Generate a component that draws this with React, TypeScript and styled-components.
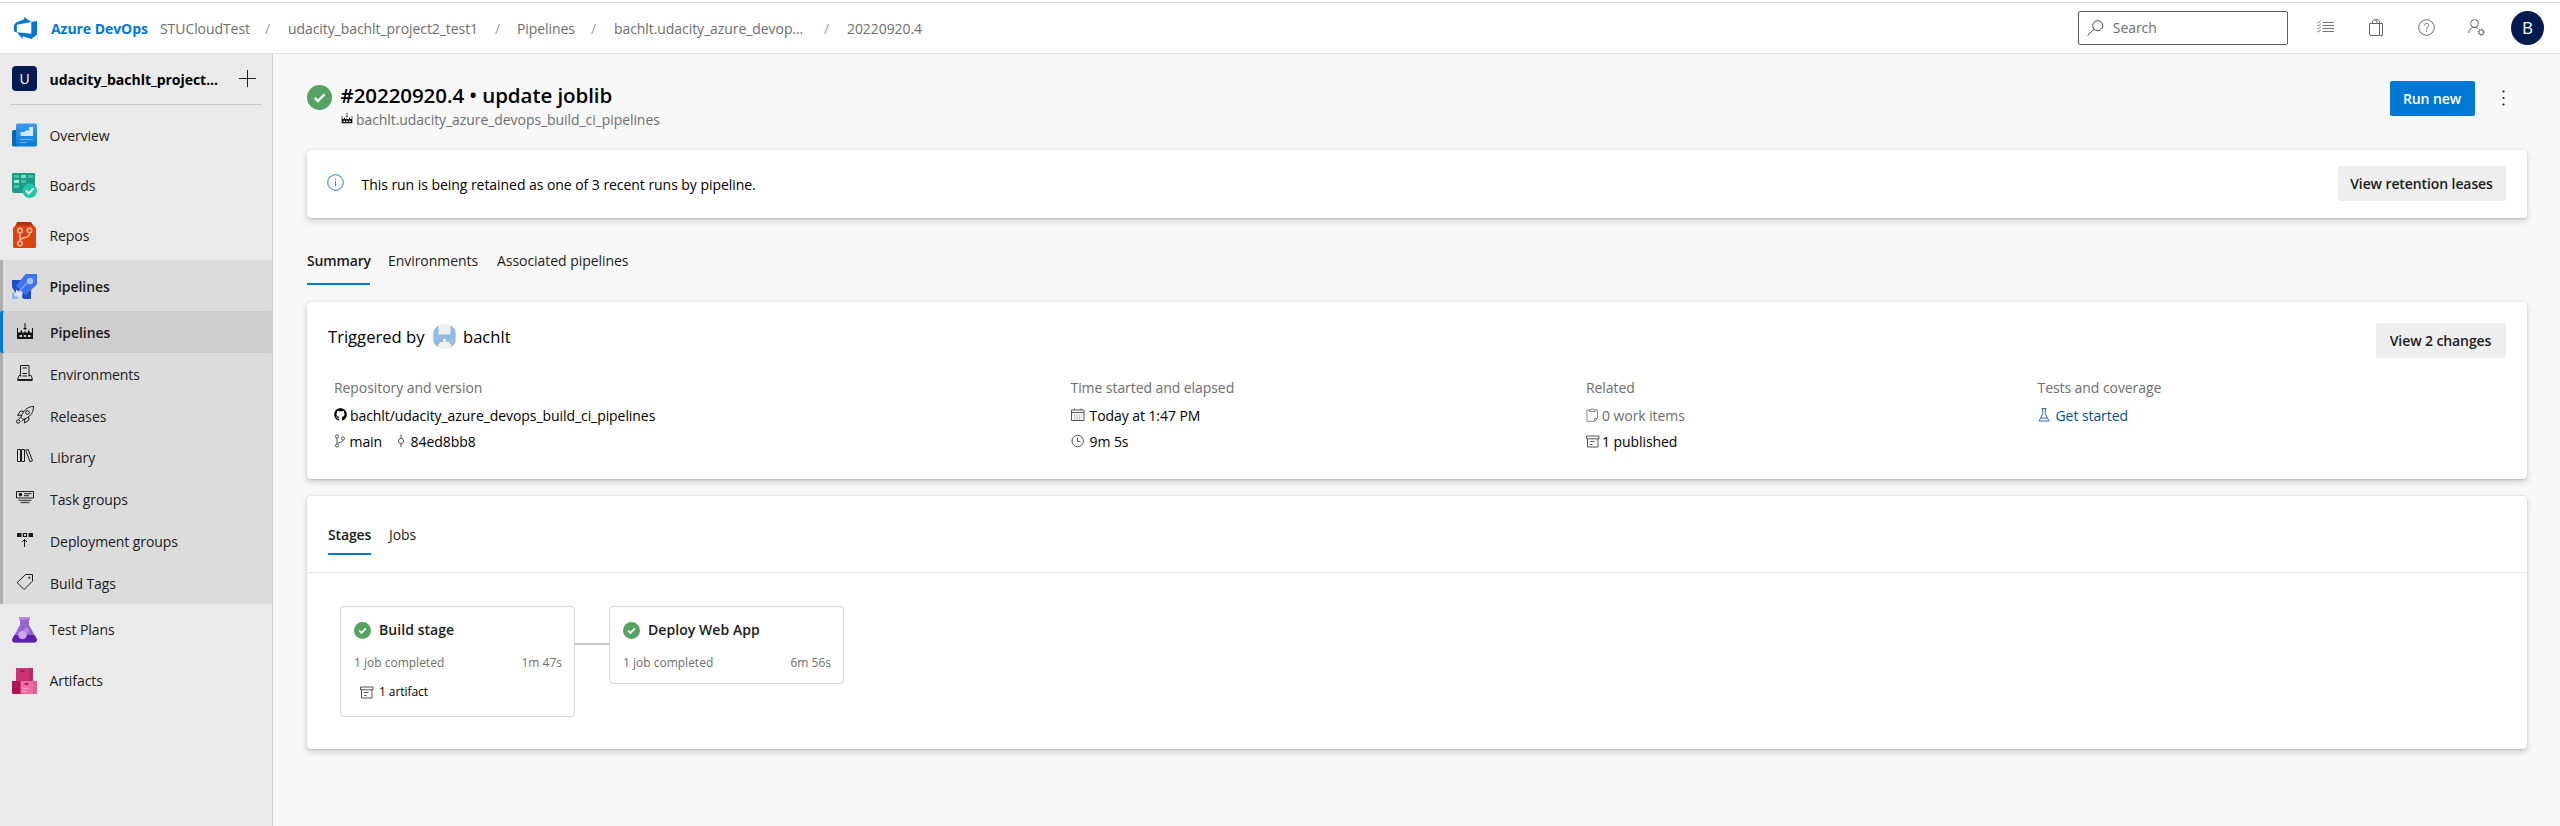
import React from "react";
import styled, { createGlobalStyle, css } from "styled-components";
import { FaGithub } from "react-icons/fa";

const GlobalStyle = createGlobalStyle`
  *, *::before, *::after { box-sizing: border-box; }
  body {
    margin: 0;
    background: #f8f8f8;
    color: #000;
    font-family: "Open Sans", "Noto Sans", sans-serif;
    font-size: 14px;
    line-height: 20px;
    letter-spacing: -0.07px;
    white-space: nowrap;
  }
  svg { display: block; flex: none; overflow: visible; }
`;

const Page = styled.div`
  display: flex;
  flex-direction: column;
  width: 2560px;
  height: 826px;
  overflow: hidden;
`;

/* ---------- top bar ---------- */
const TopBar = styled.header`
  display: flex;
  align-items: center;
  flex: none;
  height: 54px;
  padding: 3px 16px 0 14px;
  background: linear-gradient(#fff 2px, #dadada 2px, #dadada 3px, #fff 3px);
  border-bottom: 1px solid #e3e3e3;
`;
const Brand = styled.a`
  width: 109px;
  margin-left: 14px;
  padding-top: 1px;
  color: #0078d4;
  font-weight: 700;
  letter-spacing: -0.05px;
`;
const Crumbs = styled.nav`
  display: grid;
  grid-template-columns: 105px 23px 207px 22px 74px 23px 210px 23px 80px;
  padding-top: 1px;
  color: #6e6e6e;
`;
const Slash = styled.span`
  color: #9a9a9a;
`;
const TopActions = styled.div`
  display: flex;
  align-items: center;
  margin-left: auto;
  color: #666;
`;
const SearchBox = styled.div`
  display: flex;
  align-items: center;
  gap: 9px;
  width: 210px;
  height: 34px;
  margin-right: 13px;
  padding-left: 8px;
  border: 1px solid #5c5c5c;
  border-radius: 2px;
  color: #6e6e6e;
`;
const IconSlot = styled.span`
  display: flex;
  justify-content: center;
  width: 50.3px;
  margin-top: -2px;
`;
const UserDot = styled.span`
  width: 33px;
  height: 34px;
  margin-left: 9px;
  border-radius: 50%;
  background: #001b50;
  color: #fff;
  font-size: 17px;
  line-height: 34px;
  text-align: center;
`;

/* ---------- side bar ---------- */
const Body = styled.div`
  display: flex;
  flex: 1;
  min-height: 0;
`;
const Sidebar = styled.aside`
  flex: none;
  width: 273px;
  background: #eaeaea;
  border-right: 1px solid #d0d0d0;
`;
const ProjectRow = styled.div`
  display: flex;
  align-items: center;
  height: 51px;
  margin: 0 11px 5px;
  padding: 0 5px 2px 1px;
  border-bottom: 1px solid #c9c9c9;
  font-weight: 700;
`;
const ProjectTile = styled.span`
  width: 25px;
  height: 25px;
  border-radius: 4px;
  background: #001b50;
  color: #fff;
  font-weight: 400;
  line-height: 25px;
  text-align: center;
`;
const ProjectName = styled.span`
  flex: 1;
  margin: 3px 0 0 12.5px;
  letter-spacing: -0.03px;
`;
const NavItem = styled.a<{ $strong?: boolean; $height?: number }>`
  display: flex;
  align-items: center;
  gap: 12.5px;
  height: ${(p) => p.$height ?? 50}px;
  padding-left: 12px;
  padding-top: ${(p) => (p.$strong || p.$height ? 2 : 1)}px;
  color: #1b1b1b;
  font-weight: ${(p) => (p.$strong ? 550 : 400)};
  svg { margin-top: -1px; }
`;
const NavGroup = styled.div`
  background: #dcdcdc;
  box-shadow: inset 3px 0 #adadad;
`;
const SubItem = styled.a<{ $active?: boolean }>`
  display: flex;
  align-items: center;
  gap: 16px;
  height: 41.85px;
  padding-top: 2px;
  padding-left: 16px;
  color: #1b1b1b;
  svg { margin-top: -4px; }
  ${(p) =>
    p.$active &&
    css`
      background: #cecece;
      box-shadow: inset 3px 0 #0078d4;
      border-radius: 2px;
      font-weight: 550;
    `}
`;

/* ---------- main ---------- */
const Main = styled.main`
  flex: 1;
  min-width: 0;
  padding: 22px 33px 0 34px;
`;
const RunHeader = styled.div`
  display: flex;
  align-items: flex-start;
  height: 74px;
`;
const StatusSlot = styled.span`
  padding-top: 9px;
`;
const RunTitle = styled.div`
  flex: 1;
  padding-left: 8.5px;
`;
const Title = styled.h1`
  margin: 5px 0 1px;
  font-size: 20.5px;
  font-weight: 550;
  line-height: 28px;
  letter-spacing: -0.07px;
`;
const Subtitle = styled.div`
  display: flex;
  gap: 3.5px;
  align-items: center;
  color: #6e6e6e;
  svg { margin-top: -4px; }
`;
const Button = styled.button<{ $primary?: boolean; $width: number }>`
  flex: none;
  width: ${(p) => p.$width}px;
  height: 35px;
  padding: 1px 1px 0 0;
  border: 0;
  border-radius: 2px;
  background: ${(p) => (p.$primary ? "#0078d4" : "#efefef")};
  color: ${(p) => (p.$primary ? "#fff" : "#1b1b1b")};
  font: inherit;
  font-weight: ${(p) => (p.$primary ? 650 : 550)};
  letter-spacing: -0.1px;
`;
const RunButton = styled(Button)`
  margin-top: 5px;
`;
const More = styled.span`
  width: 3px;
  margin: 14px 22px 0 27px;
`;
const Card = styled.section`
  border-radius: 4px;
  background: #fff;
  box-shadow: 0 3px 7px rgba(0, 0, 0, 0.16), 0 0.6px 2px rgba(0, 0, 0, 0.14);
`;
const Notice = styled(Card)`
  display: flex;
  align-items: center;
  height: 68px;
  padding: 0 21px 1px 20px;
  > svg { margin-top: -3px; }
`;
const NoticeText = styled.span`
  flex: 1;
  margin: 2px 0 0 17.5px;
  letter-spacing: -0.05px;
`;
const Tabs = styled.div<{ $card?: boolean }>`
  display: flex;
  gap: 18px;
  height: ${(p) => (p.$card ? 77 : 84)}px;
  padding: ${(p) => (p.$card ? "20px 21px 0" : "25px 0 0")};
  border-bottom: ${(p) => (p.$card ? "1px solid #e6e6e6" : "0")};
  --tab-height: ${(p) => (p.$card ? 39 : 42)}px;
  --tab-top: ${(p) => (p.$card ? 9 : 8)}px;
`;
const Tab = styled.a<{ $active?: boolean; $width: number }>`
  width: ${(p) => p.$width}px;
  height: var(--tab-height);
  padding-top: var(--tab-top);
  color: #1b1b1b;
  font-weight: ${(p) => (p.$active ? 550 : 400)};
  letter-spacing: ${(p) => (p.$active ? -0.15 : -0.05)}px;
  box-shadow: ${(p) => (p.$active ? "inset 0 -2px #0078d4" : "none")};
`;
const Summary = styled(Card)`
  height: 177px;
  margin-bottom: 17px;
  padding: 21px 21px 0;
`;
const SummaryTop = styled.div`
  display: flex;
  justify-content: space-between;
  align-items: flex-start;
`;
const Triggered = styled.div`
  display: flex;
  align-items: center;
  height: 26px;
  font-size: 16.6px;
  letter-spacing: 0;
`;
const TriggeredLabel = styled.span`
  width: 103.5px;
  padding-top: 2px;
`;
const TriggeredName = styled.span`
  margin-left: 6.5px;
  padding-top: 2px;
`;
const Facts = styled.div`
  display: grid;
  grid-template-columns: 736.5px 515.5px 451.5px auto;
  padding: 20px 0 0 6px;
`;
const Fact = styled.div`
  display: flex;
  flex-direction: column;
  gap: 6.5px;
`;
const FactLabel = styled.div`
  color: #6e6e6e;
`;
const FactRow = styled.div<{ $tone?: string; $gap?: number }>`
  display: flex;
  align-items: center;
  gap: ${(p) => p.$gap ?? 3}px;
  padding-top: 1px;
  margin-bottom: -1px;
  color: ${(p) => p.$tone ?? "#000"};
  svg { margin-top: -2px; }
`;
const Commit = styled.span`
  display: flex;
  align-items: center;
  gap: 5.5px;
  margin-left: 10.5px;
`;
const Pipeline = styled(Card)`
  height: 253px;
`;
const Flow = styled.div`
  display: flex;
  align-items: flex-start;
  padding: 33px 0 0 33px;
`;
const Stage = styled.article<{ $height: number }>`
  width: 235px;
  height: ${(p) => p.$height}px;
  padding: 13px 12px 0 13px;
  border: 1px solid #d6d6d6;
  border-radius: 4px;
`;
const Connector = styled.div`
  width: 34px;
  height: 2px;
  margin-top: 37px;
  background: #c8c8c8;
`;
const StageName = styled.div`
  display: flex;
  align-items: center;
  gap: 8px;
  font-weight: 550;
  color: #1b1b1b;
  letter-spacing: 0.06px;
`;
const StageInfo = styled.div`
  display: flex;
  justify-content: space-between;
  margin-top: 13px;
  color: #6e6e6e;
  font-size: 12px;
  letter-spacing: 0;
`;
const StageArtifact = styled.div`
  display: flex;
  align-items: center;
  gap: 5px;
  margin: 9px 0 0 6px;
  font-size: 12px;
`;

/* ---------- icons ---------- */
const line = { fill: "none", stroke: "currentColor", strokeWidth: 1 } as const;

const DevOpsLogo = () => (
  <svg width="23" height="22" viewBox="0 0 24 24" fill="#0078d4" preserveAspectRatio="none">
    <path d="M0 8.877L2.247 5.91l8.405-3.416V.022l7.37 5.393L2.966 8.338v8.225L0 15.707zm24-4.45v14.651l-5.753 4.9-9.303-3.057v3.056l-5.978-7.416 15.057 1.798V5.415z" />
  </svg>
);
const Check = ({ size }: { size: number }) => (
  <svg width={size} height={size} viewBox="0 0 16 16">
    <circle cx="8" cy="8" r="8" fill="#55a362" />
    <path d="M4.9 8.2l2.1 2.1 4.2-4.3" fill="none" stroke="#fff" strokeWidth="1.6" />
  </svg>
);
const SearchIcon = () => (
  <svg width="17" height="16" viewBox="0 0 17 16" {...line} stroke="#444">
    <circle cx="10.7" cy="5.7" r="5" />
    <path d="M7 9.3L.6 15.4" />
  </svg>
);
const ListIcon = () => (
  <svg width="17" height="14" viewBox="0 0 17 14" {...line} strokeWidth=".9">
    <path d="M5.5 2.5H17M5.5 5.5H17M5.5 8.5H17M5.5 11.5H17M.5 2l1 1L3.8.8M.5 5l1 1 2.3-2.2M.5 8l1 1 2.3-2.2M.5 11l1 1 2.3-2.2" />
  </svg>
);
const BagIcon = () => (
  <svg width="15" height="17" viewBox="0 0 15 17" {...line}>
    <path d="M.5 4.5h13v12H2a1.5 1.5 0 0 1-1.5-1.5zM10.5 4.5v12M3.5 4.5V3a2.2 2.2 0 0 1 4.5 0v1.5M6 1.2c2-1.5 4.5 0 4.5 2v1" />
  </svg>
);
const HelpIcon = () => (
  <svg width="17" height="17" viewBox="0 0 17 17" {...line}>
    <circle cx="8.5" cy="8.5" r="7.8" />
    <path d="M6.3 6.5c0-3 4.4-2.9 4.4-.2 0 1.600-2.200 1.900-2.200 4M8.5 11.700v1.300" />
  </svg>
);
const UserGearIcon = () => (
  <svg width="17" height="17" viewBox="0 0 17 17" {...line}>
    <circle cx="6.5" cy="4.5" r="3.9" />
    <path d="M.6 14c.4-3.5 2.5-5.6 5.9-5.6 1.800 0 2.900.6 3.700 1.400" />
    <circle cx="13.2" cy="13.2" r="2.3" />
    <circle cx="13.2" cy="13.2" r="3.2" strokeDasharray="1.2 1.3" />
  </svg>
);
const PlusIcon = () => (
  <svg width="17" height="17" viewBox="0 0 17 17" {...line} stroke="#222">
    <path d="M8.5 0v17M0 8.5h17" />
  </svg>
);
const MoreIcon = () => (
  <svg width="3" height="16" viewBox="0 0 3 16" fill="#222">
    <circle cx="1.5" cy="1.5" r="1.1" />
    <circle cx="1.5" cy="8" r="1.1" />
    <circle cx="1.5" cy="14.5" r="1.1" />
  </svg>
);
const InfoIcon = () => (
  <svg width="17" height="17" viewBox="0 0 17 17" {...line} stroke="#2b7cd3">
    <circle cx="8.5" cy="8.5" r="7.8" />
    <path d="M8.5 7.2v5M8.5 4.6v1.2" />
  </svg>
);

const OverviewIcon = () => (
  <svg width="25" height="24" viewBox="0 0 25 24">
    <defs>
      <linearGradient id="ov" x1="0" y1="0" x2="0" y2="1">
        <stop offset="0" stopColor="#3f9be8" />
        <stop offset="1" stopColor="#0878d6" />
      </linearGradient>
    </defs>
    <path d="M1.5 7H5v16.5H1.5A1.5 1.5 0 0 1 0 22V8.5A1.5 1.5 0 0 1 1.5 7z" fill="#1266ad" />
    <path d="M5.5.5h18A1.5 1.5 0 0 1 25 2v20a1.5 1.5 0 0 1-1.5 1.5H4V2A1.5 1.5 0 0 1 5.5.5z" fill="url(#ov)" />
    <path d="M8.5 13V9H13V7.5h4V4h4v9z" fill="#d3e9fb" />
    <path d="M8 16.5h13M8 19.5h6.5" stroke="#6db5f0" strokeWidth="1.2" />
  </svg>
);
const BoardsIcon = () => (
  <svg width="25" height="25" viewBox="0 0 25 25">
    <path d="M1 0h21a1 1 0 0 1 1 1v19H2a2 2 0 0 1-2-2V1a1 1 0 0 1 1-1z" fill="#1f9a84" />
    <path d="M2 2h5v3H2zM16 2h5v3h-5zM9 7h5v3H9zM2 12h5v3H2z" fill="#40c3a4" />
    <path d="M9 2h5v3H9z" fill="#78e0c4" />
    <path d="M2 7h5v3H2z" fill="#b4f5e2" />
    <circle cx="17.8" cy="17.8" r="7.2" fill="#20c6a5" />
    <path d="M14 17.5l2.7 2.8 5-5" fill="none" stroke="#fff" strokeWidth="1.9" />
  </svg>
);
const ReposIcon = () => (
  <svg width="25" height="26" viewBox="0 0 25 26">
    <path d="M5 0h14l3 4.5H3z" fill="#b93105" />
    <path d="M1 6l2.5-2.5h18L24 6v18.5a1.5 1.5 0 0 1-1.5 1.5h-20A1.5 1.5 0 0 1 1 24.5z" fill="#d9440f" />
    <g fill="none" stroke="#ffb79c" strokeWidth="1.5">
      <circle cx="8" cy="8.5" r="2.3" />
      <circle cx="17.5" cy="8.5" r="2.3" />
      <circle cx="8" cy="21.5" r="2.3" />
      <path d="M8 10.8v8.4M17.5 10.8v1.5c0 2-1.5 2.5-3.5 3s-6 1-6 3.5" />
    </g>
  </svg>
);
const RocketIcon = () => (
  <svg width="25" height="25" viewBox="0 0 25 25">
    <path d="M0 6h11v7l-6 6H3.5L0 13zM11 17l8-3v11h-7.5L10 23z" fill="#1c4fc4" />
    <path d="M13.5 0H25v10.5L13.5 21 4 12z" fill="#3f74ea" />
    <path d="M15 9l-8.5 9" stroke="#7ea6f5" strokeWidth="1.3" />
    <circle cx="18" cy="7" r="3.2" fill="#a7c4fa" />
    <path d="M4.5 15.5L10 21l-3 1-3.5-3.5z" fill="#dce6fb" />
    <path d="M0 18.5h2.5v4H6V25H0z" fill="#92b2f4" />
  </svg>
);
const TestPlansIcon = () => (
  <svg width="25" height="26" viewBox="0 0 25 26">
    <path d="M7 0h11v2.5h-1V8l7.5 13.5c1 2-.2 4-2.5 4H3c-2.3 0-3.5-2-2.5-4L8 8V2.5H7z" fill="#9a63d2" />
    <path d="M2.5 18h20l2 3.5c1 2-.2 4-2.5 4H3c-2.3 0-3.5-2-2.5-4z" fill="#5c1eab" />
    <path d="M7 0h11v2.5H7z" fill="#b18bdd" />
    <circle cx="10.5" cy="18" r="4.3" fill="#c9a6ec" />
    <circle cx="14.5" cy="13.5" r="2.4" fill="#b78ee3" />
  </svg>
);
const ArtifactsIcon = () => (
  <svg width="25" height="26" viewBox="0 0 25 26">
    <path d="M4 0h17v13H4z" fill="#cc3075" />
    <path d="M17 0h4v13h-4z" fill="#b9286a" />
    <path d="M0 13h9v13H1a1 1 0 0 1-1-1z" fill="#ad1457" />
    <path d="M8.5 13H25v12a1 1 0 0 1-1 1H8.5z" fill="#ee6ba2" />
    <path d="M21 13h4v12a1 1 0 0 1-1 1h-3z" fill="#e45b95" />
    <path d="M8.5 3h4M5 16h3M12.5 16h4" stroke="#971650" strokeWidth="1.7" />
    <path d="M10.5 20.5h6M10.5 23.5h4" stroke="#f5a3c6" strokeWidth="1.3" />
  </svg>
);

const BuildIcon = ({ w = 18 }: { w?: number }) => (
  <svg width={w} height={w} viewBox="0 0 18 18" fill="#111">
    <path d="M8.5 1h1v5H11L9 8 7 6h1.5z" />
    <path fillRule="evenodd" d="M1 6h1v4.5h2.5V9L6 8v2.5h2.3v-1h1.4v1H12V8l1.5 1v1.5H16V6h1v11H1zM3.5 13v2H6v-2zM7.8 13v2h2.4v-2zM12 13v2h2.5v-2z" />
  </svg>
);
const EnvIcon = () => (
  <svg width="18" height="18" viewBox="0 0 18 18" {...line}>
    <path d="M4.5 12.5v-11H13v11M6.5 4H11M6.5 9.5H11M6.5 12H11M4.5 11.5H3l-1.5 4h15l-1.5-4h-2M1.5 16.5h15" />
  </svg>
);
const ReleaseIcon = () => (
  <svg width="18" height="18" viewBox="0 0 18 18" {...line}>
    <path d="M17.5.5c-5 0-8.5 2.5-11.5 8l-1 3 2 2 3-1c5.5-3 7.5-7 7.5-12zM8 5.5L4.5 5l-3 4.5L6 9M12.5 10.5l.5 3.5-4.5 3 .3-4.5M5 11l-2.5 2M7.5 13.5l-1.500 2" />
    <circle cx="11.5" cy="6.5" r="1.8" />
    <circle cx="2.2" cy="15.5" r="1.7" />
  </svg>
);
const LibraryIcon = () => (
  <svg width="18" height="18" viewBox="0 0 18 18" {...line}>
    <path d="M1.5 2.5h3v12h-3zM5.500 2.500h3v12h-3zM9.700 3.200l2.500-.8 4.300 11.400-2.500.9z" />
  </svg>
);
const TaskGroupIcon = () => (
  <svg width="18" height="18" viewBox="0 0 18 18" {...line}>
    <path d="M.5 2.5h17V9H.5zM8 4.7h7.500M8 6.700h5" />
    <path d="M3.3 4.5h2.2v2.2H3.3z" fill="currentColor" />
    <path d="M2.5 11.3h13M4.5 13.5h9" strokeWidth="1.3" opacity=".7" />
  </svg>
);
const DeployIcon = () => (
  <svg width="18" height="18" viewBox="0 0 18 18" {...line}>
    <path d="M1 2h4.5v4H1zM12.5 2H17v4h-4.5z" fill="currentColor" stroke="none" />
    <path d="M7.3 2.5h3.2v3H7.3z" strokeWidth="1.2" />
    <path d="M8.5 8.5V16M6 11l2.5-2.5L11 11" />
  </svg>
);
const TagIcon = () => (
  <svg width="18" height="18" viewBox="0 0 18 18" {...line}>
    <path d="M9.5 1.5h7v6.8L8 16.5 1.2 9.7z" />
    <circle cx="13.3" cy="4.7" r=".7" />
  </svg>
);
const BranchIcon = () => (
  <svg width="11" height="14" viewBox="0 0 11 14" {...line} stroke="#555">
    <circle cx="3" cy="2.5" r="1.6" />
    <circle cx="3" cy="11.5" r="1.6" />
    <circle cx="9" cy="4.5" r="1.6" />
    <path d="M3 4.2v5.600M9 6.200c0 2.300-4.300 1.500-5.500 3.700" />
  </svg>
);
const CommitIcon = () => (
  <svg width="8" height="14" viewBox="0 0 8 14" {...line} stroke="#555">
    <circle cx="4" cy="7" r="2.6" />
    <path d="M4 .5v4M4 9.600v3.500" />
  </svg>
);
const CalendarIcon = () => (
  <svg width="14" height="14" viewBox="0 0 14 14" {...line} stroke="#555">
    <path d="M.5 2H13v10.500H.5zM.5 4.500H13M3.500.5V2M10 .5V2" />
    <path d="M3 7h8M3 9h8M3 11h6" strokeDasharray="1.2 1.2" opacity=".7" />
  </svg>
);
const ClockIcon = () => (
  <svg width="14" height="14" viewBox="0 0 14 14" {...line} stroke="#555">
    <circle cx="6.7" cy="7" r="5.7" />
    <path d="M6.5 3.500v4h3" />
  </svg>
);
const ClipboardIcon = () => (
  <svg width="13" height="14" viewBox="0 0 13 14" {...line} stroke="#888">
    <path d="M3.5 2H1v11.300h7.500l3-2.800V2H9M3.500 3.500V1.800H5a1.200 1.200 0 0 1 2.400 0H9v1.700zM8.500 13v-2.500h3" />
  </svg>
);
const BoxIcon = () => (
  <svg width="14" height="13" viewBox="0 0 14 13" {...line} stroke="#555">
    <path d="M.5 1H13v2.800H.5zM1.500 3.800V12H12V3.800M4 6.500h4.500M4 9.500h2.500" />
  </svg>
);
const FlaskIcon = () => (
  <svg width="12" height="14" viewBox="0 0 12 14" {...line} stroke="#2a6ca8">
    <path d="M3.5.6h5M4.700.6v5.200L1 13h10L7.300 5.800V.6M2.800 10h6.400" />
  </svg>
);
const AvatarIcon = () => (
  <svg width="25" height="25" viewBox="0 0 25 25">
    <defs>
      <clipPath id="round">
        <circle cx="12.5" cy="12.5" r="12.5" />
      </clipPath>
    </defs>
    <g clipPath="url(#round)">
      <path d="M0 0h25v25H0z" fill="#efefef" />
      <path d="M1.5 2H6.500v8.500h12V2h5v21.500H19V20h-1.500v-2H14v-3h-3v3H7.500v2H6v3.500H1.500z" fill="#92bde0" />
    </g>
  </svg>
);

/* ---------- page ---------- */
const crumbs = ["STUCloudTest", "udacity_bachlt_project2_test1", "Pipelines", "bachlt.udacity_azure_devop...", "20220920.4"];

const subItems: [string, React.ReactNode][] = [
  ["Pipelines", <BuildIcon />],
  ["Environments", <EnvIcon />],
  ["Releases", <ReleaseIcon />],
  ["Library", <LibraryIcon />],
  ["Task groups", <TaskGroupIcon />],
  ["Deployment groups", <DeployIcon />],
  ["Build Tags", <TagIcon />],
];

export default function App() {
  return (
    <Page>
      <GlobalStyle />
      <TopBar>
        <DevOpsLogo />
        <Brand>Azure DevOps</Brand>
        <Crumbs>
          {crumbs.map((c, i) => (
            <React.Fragment key={c}>
              {i > 0 && <Slash>/</Slash>}
              <span>{c}</span>
            </React.Fragment>
          ))}
        </Crumbs>
        <TopActions>
          <SearchBox>
            <SearchIcon />
            Search
          </SearchBox>
          <IconSlot><ListIcon /></IconSlot>
          <IconSlot><BagIcon /></IconSlot>
          <IconSlot><HelpIcon /></IconSlot>
          <IconSlot><UserGearIcon /></IconSlot>
          <UserDot>B</UserDot>
        </TopActions>
      </TopBar>
      <Body>
        <Sidebar>
          <ProjectRow>
            <ProjectTile>U</ProjectTile>
            <ProjectName>udacity_bachlt_project...</ProjectName>
            <PlusIcon />
          </ProjectRow>
          <NavItem><OverviewIcon />Overview</NavItem>
          <NavItem><BoardsIcon />Boards</NavItem>
          <NavItem><ReposIcon />Repos</NavItem>
          <NavGroup>
            <NavItem $strong $height={51}><RocketIcon />Pipelines</NavItem>
            {subItems.map(([label, icon], i) => (
              <SubItem key={label} $active={i === 0}>{icon}{label}</SubItem>
            ))}
          </NavGroup>
          <NavItem $height={51}><TestPlansIcon />Test Plans</NavItem>
          <NavItem $height={51}><ArtifactsIcon />Artifacts</NavItem>
        </Sidebar>
        <Main>
          <RunHeader>
            <StatusSlot><Check size={25} /></StatusSlot>
            <RunTitle>
              <Title>#20220920.4 • update joblib</Title>
              <Subtitle><BuildIcon w={12} />bachlt.udacity_azure_devops_build_ci_pipelines</Subtitle>
            </RunTitle>
            <RunButton $primary $width={85}>Run new</RunButton>
            <More><MoreIcon /></More>
          </RunHeader>
          <Notice>
            <InfoIcon />
            <NoticeText>This run is being retained as one of 3 recent runs by pipeline.</NoticeText>
            <Button $width={168}>View retention leases</Button>
          </Notice>
          <Tabs>
            <Tab $active $width={63}>Summary</Tab>
            <Tab $width={91}>Environments</Tab>
            <Tab $width={132}>Associated pipelines</Tab>
          </Tabs>
          <Summary>
            <SummaryTop>
              <Triggered>
                <TriggeredLabel>Triggered by</TriggeredLabel>
                <AvatarIcon />
                <TriggeredName>bachlt</TriggeredName>
              </Triggered>
              <Button $width={130}>View 2 changes</Button>
            </SummaryTop>
            <Facts>
              <Fact>
                <FactLabel>Repository and version</FactLabel>
                <FactRow><FaGithub size={13} />bachlt/udacity_azure_devops_build_ci_pipelines</FactRow>
                <FactRow $gap={4.5}>
                  <BranchIcon />main
                  <Commit><CommitIcon />84ed8bb8</Commit>
                </FactRow>
              </Fact>
              <Fact>
                <FactLabel>Time started and elapsed</FactLabel>
                <FactRow $gap={5}><CalendarIcon />Today at 1:47 PM</FactRow>
                <FactRow $gap={5}><ClockIcon />9m 5s</FactRow>
              </Fact>
              <Fact>
                <FactLabel>Related</FactLabel>
                <FactRow $tone="#6e6e6e"><ClipboardIcon />0 work items</FactRow>
                <FactRow $gap={2}><BoxIcon />1 published</FactRow>
              </Fact>
              <Fact>
                <FactLabel>Tests and coverage</FactLabel>
                <FactRow $tone="#004e8c" $gap={6}><FlaskIcon />Get started</FactRow>
              </Fact>
            </Facts>
          </Summary>
          <Pipeline>
            <Tabs $card>
              <Tab $active $width={43}>Stages</Tab>
              <Tab $width={30}>Jobs</Tab>
            </Tabs>
            <Flow>
              <Stage $height={111}>
                <StageName><Check size={17} />Build stage</StageName>
                <StageInfo><span>1 job completed</span><span>1m 47s</span></StageInfo>
                <StageArtifact><BoxIcon />1 artifact</StageArtifact>
              </Stage>
              <Connector />
              <Stage $height={78}>
                <StageName><Check size={17} />Deploy Web App</StageName>
                <StageInfo><span>1 job completed</span><span>6m 56s</span></StageInfo>
              </Stage>
            </Flow>
          </Pipeline>
        </Main>
      </Body>
    </Page>
  );
}
